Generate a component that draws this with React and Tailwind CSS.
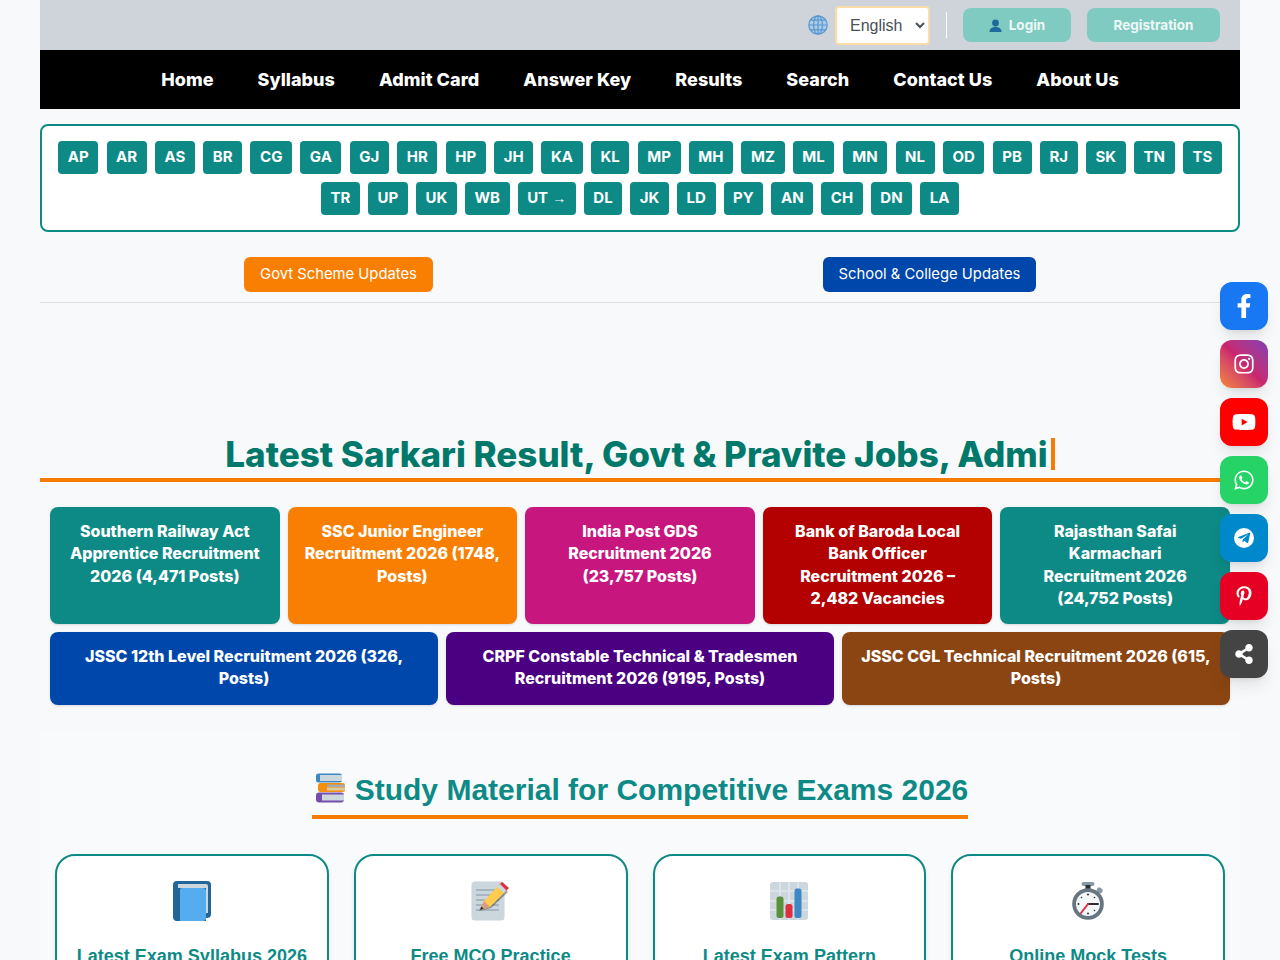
import { FaFacebookF, FaInstagram, FaYoutube, FaWhatsapp, FaPinterestP, FaShareAlt, FaTelegramPlane } from "react-icons/fa";

const navLinks = ["Home", "Syllabus", "Admit Card", "Answer Key", "Results", "Search", "Contact Us", "About Us"];

const statesRowOne = ["AP", "AR", "AS", "BR", "CG", "GA", "GJ", "HR", "HP", "JH", "KA", "KL", "MP", "MH", "MZ", "ML", "MN", "NL", "OD", "PB", "RJ", "SK", "TN", "TS"];
const statesRowTwo = ["TR", "UP", "UK", "WB", "UT", "DL", "JK", "LD", "PY", "AN", "CH", "DN", "LA"];

const topJobs = [
  { title: "Southern Railway Act\nApprentice Recruitment\n2026 (4,471 Posts)", color: "bg-[#0d8a86]" },
  { title: "SSC Junior Engineer\nRecruitment 2026 (1748,\nPosts)", color: "bg-[#f97f03]" },
  { title: "India Post GDS\nRecruitment 2026\n(23,757 Posts)", color: "bg-[#c7177f]" },
  { title: "Bank of Baroda Local\nBank Officer\nRecruitment 2026 –\n2,482 Vacancies", color: "bg-[#b30000]" },
  { title: "Rajasthan Safai\nKarmachari\nRecruitment 2026\n(24,752 Posts)", color: "bg-[#0d8a86]" },
];

const moreJobs = [
  { title: "JSSC 12th Level Recruitment 2026 (326,\nPosts)", color: "bg-[#0047ab]" },
  { title: "CRPF Constable Technical & Tradesmen\nRecruitment 2026 (9195, Posts)", color: "bg-[#4b0082]" },
  { title: "JSSC CGL Technical Recruitment 2026 (615,\nPosts)", color: "bg-[#8b4513]" },
];

const socials = [
  { icon: <FaFacebookF size={24} />, color: "bg-[#1877f2]" },
  { icon: <FaInstagram size={22} />, color: "bg-gradient-to-tr from-[#f58529] via-[#c9256f] to-[#833ab4]" },
  { icon: <FaYoutube size={24} />, color: "bg-[#ff0000]" },
  { icon: <FaWhatsapp size={22} />, color: "bg-[#25d366]" },
  { icon: <span className="flex h-[20px] w-[20px] items-center justify-center rounded-full bg-white text-[#0088cc]"><FaTelegramPlane size={14} /></span>, color: "bg-[#0088cc]" },
  { icon: <FaPinterestP size={20} />, color: "bg-[#e60023]" },
  { icon: <FaShareAlt size={20} />, color: "bg-[#444444]" },
];

const GlobeIcon = () => (
  <svg width="20" height="20" viewBox="0 0 20 20" fill="none" stroke="#5b97cf" strokeWidth="1.2">
    <circle cx="10" cy="10" r="9.2" fill="#a9cbe8" />
    <ellipse cx="10" cy="10" rx="4.4" ry="9.2" />
    <path d="M10 .8v18.4M.8 10h18.4M2.2 5.2h15.6M2.2 14.8h15.6" />
  </svg>
);

const UserIcon = () => (
  <svg width="13" height="13" viewBox="0 0 13 13" fill="#1f6a9c">
    <circle cx="6.5" cy="4" r="3.4" />
    <path d="M.5 13c0-3.4 2.4-5 6-5s6 1.6 6 5z" />
  </svg>
);

const BooksIcon = () => (
  <svg width="30" height="30" viewBox="0 0 30 30">
    <rect x="1" y="0.5" width="26" height="9" rx="2.5" fill="#3b88c3" />
    <rect x="5" y="2" width="22" height="6" fill="#ccd6dd" />
    <rect x="3" y="10" width="27" height="9" rx="2.5" fill="#f4900c" />
    <rect x="12" y="11.5" width="18" height="2.5" fill="#a7a9ac" />
    <rect x="12" y="14.5" width="18" height="3" fill="#d8c9a0" />
    <rect x="1" y="19.5" width="28" height="10" rx="3" fill="#744eaa" />
    <rect x="7" y="21.5" width="22" height="6" fill="#ccd6dd" />
  </svg>
);

const BookIcon = () => (
  <svg width="38" height="40" viewBox="0 0 38 40">
    <path d="M4 0h30a4 4 0 0 1 4 4v29a4 4 0 0 1-4 4h-1v3H4a4 4 0 0 1-4-4V4a4 4 0 0 1 4-4z" fill="#226699" />
    <path d="M5 3h28a2 2 0 0 1 2 2v27h-2V7H5z" fill="#ccd6dd" />
    <path d="M9 7h21a3 3 0 0 1 3 3v27a3 3 0 0 1-3 3H7V9a2 2 0 0 1 2-2z" fill="#55acee" />
  </svg>
);

const MemoIcon = () => (
  <svg width="40" height="40" viewBox="0 0 40 40">
    <rect x="0.5" y="0.5" width="33" height="39" rx="3.5" fill="#ccd6dd" />
    <path d="M5 9h23M5 14h23M5 19h23M5 24h23M5 29h23" stroke="#99aab5" strokeWidth="1.6" />
    <path d="M8 30l5-9L29 4l8 7-17 16z" fill="#292f33" opacity="0.45" />
    <path d="M9 29l4-9L28 4l7 6-16 16z" fill="#ffcc4d" />
    <path d="M28 4l3-3 7 6-3 3z" fill="#dd2e44" />
    <path d="M26 6l3-3 6 6-2.500 2.500z" fill="#ccd6dd" />
    <path d="M13 20l6 6-10 3.500z" fill="#d99e82" />
    <path d="M9 29l1.200-3.500 2.500 2.300z" fill="#292f33" />
  </svg>
);

const ChartIcon = () => (
  <svg width="38" height="38" viewBox="0 0 38 38">
    <rect width="38" height="38" rx="3" fill="#ccd6dd" />
    <path d="M10 0v38M19 0v38M28 0v38M0 9h38M0 19h38M0 28h38" stroke="#e1e8ed" strokeWidth="1.500" />
    <rect x="6.500" y="14.500" width="7" height="21.500" rx="2.500" fill="#5c913b" />
    <rect x="15.500" y="22" width="7" height="14" rx="2.500" fill="#dd2e44" />
    <rect x="24.500" y="6.500" width="7" height="29.500" rx="2.500" fill="#3b88c3" />
  </svg>
);

const TimerIcon = () => (
  <svg width="32" height="38" viewBox="0 0 32 38">
    <rect x="9.500" y="0" width="13" height="4" rx="2" fill="#8899a6" />
    <rect x="13.500" y="3" width="5" height="5" fill="#292f33" />
    <rect x="25" y="6" width="6" height="5" rx="2" transform="rotate(40 28 8)" fill="#8899a6" />
    <circle cx="16" cy="22" r="15.800" fill="#66757f" />
    <circle cx="16" cy="22" r="12" fill="#f5f8fa" />
    <path d="M16 22h10" stroke="#292f33" strokeWidth="2" strokeLinecap="round" />
    <path d="M16 22l-7 9" stroke="#dd2e44" strokeWidth="2" strokeLinecap="round" />
    <g fill="#292f33">
      <circle cx="16" cy="12.500" r="1" />
      <circle cx="16" cy="31.500" r="1" />
      <circle cx="6.500" cy="22" r="1" />
      <circle cx="9.500" cy="15.500" r="0.800" />
      <circle cx="22.500" cy="15.500" r="0.800" />
      <circle cx="22.500" cy="28.500" r="0.800" />
    </g>
  </svg>
);

const studyCards = [
  { title: "Latest Exam Syllabus 2026", icon: <BookIcon /> },
  { title: "Free MCQ Practice", icon: <MemoIcon /> },
  { title: "Latest Exam Pattern", icon: <ChartIcon /> },
  { title: "Online Mock Tests", icon: <TimerIcon /> },
];

const StateButton = ({ label, arrow }) => (
  <a className="flex h-[33px] items-center gap-[4px] rounded bg-[#0d8a86] px-[9.6px] text-[15px] font-bold text-white">
    {label}
    {arrow && <span className="font-['Liberation_Sans',sans-serif] text-[14px] font-normal">→</span>}
  </a>
);

const JobCard = ({ job }) => (
  <a className={`${job.color} rounded-lg px-[15px] pt-[13px] pb-[14.4px] text-center text-[16px] leading-[22.4px] font-extrabold whitespace-pre-line text-white shadow-sm`}>
    {job.title}
  </a>
);

const App = () => {
  return (
    <div className="h-[960px] overflow-hidden bg-[#f8f9fa] font-['Inter','Liberation_Sans',sans-serif]">
      <div className="mx-auto w-[1200px]">
        {/* top bar */}
        <div className="flex h-[50px] items-center justify-end bg-[#ced4da] pr-[20px]">
          <GlobeIcon />
          <select className="ml-[7px] h-[39px] w-[95px] rounded border-2 border-[#f8dda8] bg-white pl-[9px] font-['Liberation_Sans',sans-serif] text-[16px] text-[#495057]">
            <option>English</option>
          </select>
          <div className="mx-[16px] h-[26px] w-px bg-white"></div>
          <button className="flex h-[34px] w-[108px] items-center justify-center gap-[7px] rounded-lg bg-[#7fcbc2] text-[13.5px] font-bold text-[#eef8f6]">
            <UserIcon />
            Login
          </button>
          <button className="ml-[16px] h-[34px] w-[133px] rounded-lg bg-[#7fcbc2] text-[13.5px] font-bold text-[#eef8f6]">
            Registration
          </button>
        </div>

        {/* main nav */}
        <nav className="flex h-[59px] items-center justify-center gap-[44px] bg-black">
          {navLinks.map((link) => (
            <a key={link} className="text-[18px] font-extrabold tracking-[0.05px] text-white">{link}</a>
          ))}
        </nav>

        {/* states */}
        <div className="mt-[15px] flex h-[108px] flex-col justify-center gap-[8px] rounded-lg border-2 border-[#0d8a86] bg-white">
          <div className="flex justify-center gap-[8.25px]">
            {statesRowOne.map((s) => <StateButton key={s} label={s} />)}
          </div>
          <div className="flex justify-center gap-[8px]">
            {statesRowTwo.map((s) => <StateButton key={s} label={s} arrow={s === "UT"} />)}
          </div>
        </div>

        {/* update links */}
        <div className="mt-[25px] flex justify-center gap-[390px] border-b border-[#dee2e6] pb-[10px]">
          <a className="flex h-[35px] w-[189px] items-center justify-center rounded-md bg-[#f97f03] text-[14.8px] text-white">Govt Scheme Updates</a>
          <a className="flex h-[35px] w-[213px] items-center justify-center rounded-md bg-[#0047ab] text-[14.8px] text-white">School &amp; College Updates</a>
        </div>

        {/* latest jobs */}
        <div className="mt-[128px] h-[51px] border-b-4 border-[#f57c00] text-center">
          <h2 className="flex items-center justify-center text-[35px] leading-[46px] font-extrabold whitespace-nowrap text-[#00796b]">
            Latest Sarkari Result, Govt &amp; Pravite Jobs, Admi
            <span className="ml-[3px] h-[32px] w-[4px] bg-[#f57c00]"></span>
          </h2>
        </div>

        <div className="px-[10px]">
          <div className="mt-[25px] grid grid-cols-5 gap-[8px]">
            {topJobs.map((job) => <JobCard key={job.title} job={job} />)}
          </div>
          <div className="mt-[8px] grid auto-rows-[73px] grid-cols-3 gap-[8px]">
            {moreJobs.map((job) => <JobCard key={job.title} job={job} />)}
          </div>
        </div>

        {/* study material */}
        <div className="mt-[25px] rounded-lg bg-[#f8fafc] px-[15px] pt-[40px]">
          <div className="text-center">
            <h2 className="inline-flex h-[49px] items-start gap-[10px] border-b-4 border-[#f57c00] font-['Liberation_Sans',sans-serif] text-[30px] leading-[40px] font-bold text-[#0d8a86]">
              <span className="pt-[3px] pl-[3px]"><BooksIcon /></span>
              Study Material for Competitive Exams 2026
            </h2>
          </div>
          <div className="mt-[35px] grid grid-cols-4 gap-[25px]">
            {studyCards.map((card) => (
              <div key={card.title} className="flex h-[200px] flex-col items-center rounded-[20px] border-2 border-[#0d8a86] bg-white pt-[24px] shadow-md">
                <div className="flex h-[42px] items-center">{card.icon}</div>
                <h3 className="mt-[21px] font-['Liberation_Sans',sans-serif] text-[18px] font-bold text-[#0d8a86]">{card.title}</h3>
              </div>
            ))}
          </div>
        </div>
      </div>

      {/* floating social buttons */}
      <div className="fixed top-[282px] right-[12px] flex flex-col gap-[10px]">
        {socials.map((s, i) => (
          <a key={i} className={`${s.color} flex h-[48px] w-[48px] items-center justify-center rounded-xl text-white shadow-lg`}>
            {s.icon}
          </a>
        ))}
      </div>
    </div>
  );
};

export default App;
